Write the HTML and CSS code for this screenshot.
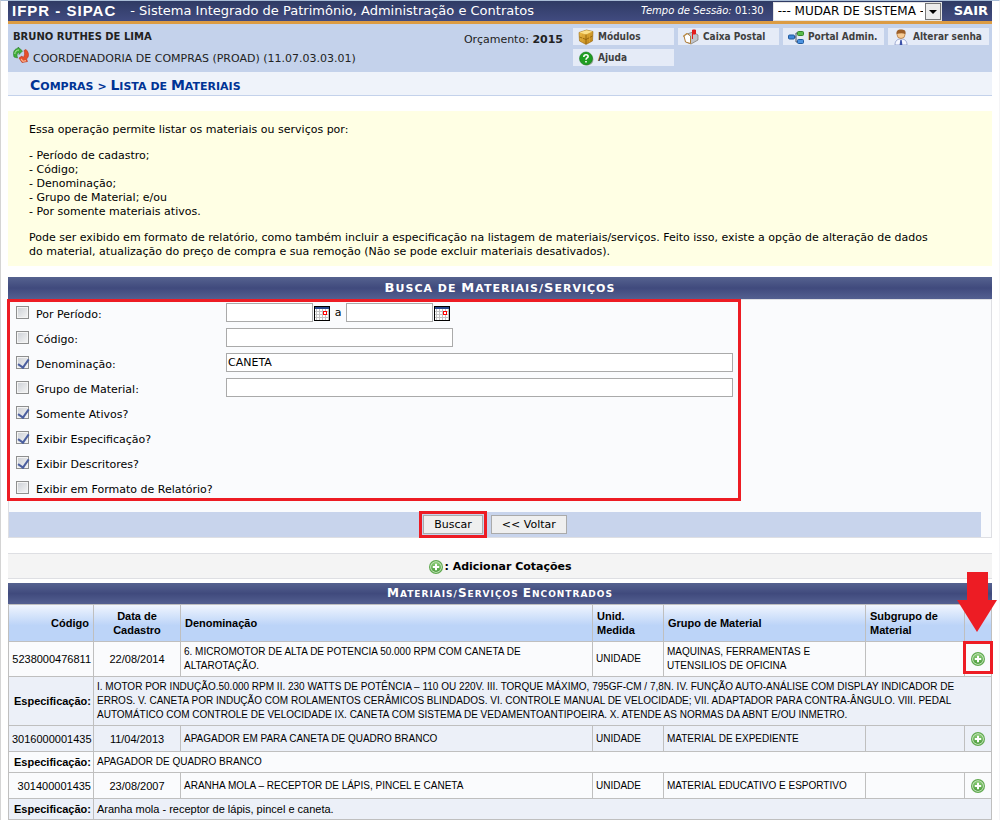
FILE: index.html
```html
<!DOCTYPE html>
<html lang="pt-BR">
<head>
<meta charset="utf-8">
<title>SIPAC - Lista de Materiais</title>
<link rel="stylesheet" href="styles.css">
</head>
<body>
<svg class="defs" aria-hidden="true">
  <defs>
    <linearGradient id="green" x1="0" y1="0" x2="0" y2="1"><stop offset="0" stop-color="#8fce7c"/><stop offset="1" stop-color="#4a9c3a"/></linearGradient>
    <linearGradient id="gold" x1="0" y1="0" x2="1" y2="1"><stop offset="0" stop-color="#f0c04a"/><stop offset="1" stop-color="#b87d12"/></linearGradient>
    <symbol id="add" viewBox="0 0 16 16">
      <circle cx="8" cy="8" r="7" fill="#5fa94e"/>
      <circle cx="8" cy="8" r="5.8" fill="#d5ecce"/>
      <circle cx="8" cy="8" r="5" fill="url(#green)"/>
      <path d="M7 4.800h2V7h2.200v2H9v2.200H7V9H4.800V7H7z" fill="#fff"/>
    </symbol>
    <symbol id="calendar" viewBox="0 0 16 15">
      <rect width="16" height="15" fill="#000"/>
      <rect x="1" y="1" width="14" height="2" fill="#26468c"/>
      <rect x="1" y="3" width="14" height="11" fill="#fff"/>
      <path d="M1 5.500h14M1 8.500h14M1 11.500h14M2.500 3v11M5.500 3v11M8.500 3v11M11.500 3v11M14.500 3v11" stroke="#c4c4c4"/>
      <rect x="9.500" y="5.500" width="3" height="3" fill="#fff" stroke="#f00"/>
    </symbol>
  </defs>
</svg>
<div class="page">
  <header class="topbar">
    <h1 class="brand">IFPR - SIPAC</h1>
    <span class="brand-sub">- Sistema Integrado de Patrimônio, Administração e Contratos</span>
    <span class="session"><em>Tempo de Sessão:</em> 01:30</span>
    <span class="switch">
      <select aria-label="Mudar de sistema"><option>--- MUDAR DE SISTEMA ---</option></select>
      <svg class="switch-arrow" viewBox="0 0 16 17" aria-hidden="true"><rect x=".5" y=".5" width="15" height="16" fill="#ececec" stroke="#777"/><path d="M4 7h8l-4 4z" fill="#000"/></svg>
    </span>
    <a class="exit" href="#">SAIR</a>
  </header>

  <section class="userbar">
    <div class="user">
      <strong>BRUNO RUTHES DE LIMA</strong>
      <span class="unit">
        <svg class="icon" viewBox="0 0 16 16" aria-hidden="true">
          <path d="M1 10C-.5 5 1.500 1.500 5 1.500V0l4.500 4L6 7.500V5.500C4 5.500 3.500 8 4.500 11z" fill="#3fae38" stroke="#2b7d2b" stroke-width=".6"/>
          <path d="M1.800 7C2 4.500 3.500 3 6 3" stroke="#b5e6a5" fill="none"/>
          <path d="M11 3.500l2-1c3 3 3.500 7 .5 9.500l1 2.500-5.500 1L6 11l3-2 1 1.500c1.800-1.500 2-4 1-7z" fill="#e5502a" stroke="#b83318" stroke-width=".6"/>
          <path d="M8 12l2 2.300 3-.6" stroke="#f9b48f" stroke-width="1.200" fill="none"/>
        </svg>
        COORDENADORIA DE COMPRAS (PROAD) (11.07.03.03.01)
      </span>
    </div>
    <div class="budget">Orçamento: <strong>2015</strong></div>
    <nav class="menu">
      <a href="#"><svg class="icon" viewBox="0 0 16 16" aria-hidden="true"><path d="M1 3.500L8.500 1 15 2.500 14.500 12 8 15.500 1.500 12z" fill="url(#gold)" stroke="#9a6a10" stroke-width=".6"/><path d="M1.500 3.500L8 5.500l6.500-3L8.500 1.300z" fill="#fbe08a"/><path d="M8 5.500v9.500M1.500 8L8 10.500 14.500 7" stroke="#8c5c08" stroke-width=".8" fill="none"/><path d="M4.500 5v8M11.500 4.500V13" stroke="#d9a233" stroke-width=".8"/></svg>Módulos</a>
      <a href="#"><svg class="icon" viewBox="0 0 16 16" aria-hidden="true"><path d="M4 5l6-2 5 3v5l-7 4-5-2z" fill="#bfc4cc" stroke="#7d7467" stroke-width=".7"/><path d="M1 7l3-2.500L7.500 7v7.500L2.500 13z" fill="#fff" stroke="#b07c36"/><path d="M0 7.500L4 4.500" stroke="#b98a45" stroke-width="1.200"/><path d="M9.500 10V1h3v4h-3" fill="#e31b1b" stroke="#e31b1b"/></svg>Caixa Postal</a>
      <a href="#"><svg class="icon" viewBox="0 0 16 16" aria-hidden="true"><path d="M5 8h3V4h3M8 8v5h3" stroke="#4a5566" fill="none"/><rect x=".5" y="6" width="6" height="4" rx="1" fill="#3f86d8" stroke="#215a9d"/><rect x="9.500" y="2.500" width="6" height="4" rx="1" fill="#59bb4c" stroke="#35852c"/><rect x="9.500" y="10.500" width="6" height="4" rx="1" fill="#4b92e0" stroke="#215a9d"/></svg>Portal Admin.</a>
      <a href="#"><svg class="icon" viewBox="0 0 16 16" aria-hidden="true"><path d="M2 16c0-4 2-6 6-6s6 2 6 6z" fill="#f5f7ff" stroke="#8797c7" stroke-width=".8"/><path d="M7.300 11h1.400l.7 5H6.600z" fill="#3b51a8"/><circle cx="8" cy="5.500" r="4" fill="#f7cb94" stroke="#a86d34" stroke-width=".7"/><path d="M3.500 5C3 1 6 0 9 .5S13 2 12.500 5C10 4 7 4 3.500 5z" fill="#9d5f28"/></svg>Alterar senha</a>
      <a href="#"><svg class="icon" viewBox="0 0 16 16" aria-hidden="true"><circle cx="9.500" cy="9.500" r="6" fill="#a5afa5"/><circle cx="8" cy="8.500" r="6.500" fill="#1f9e22" stroke="#137317" stroke-width=".6"/><path d="M5.800 7c0-3 4.600-2.800 4.300-.4C10 8 8 8 8 9.700M8 11v1.600" stroke="#fff" stroke-width="1.600" fill="none"/></svg>Ajuda</a>
    </nav>
  </section>

  <h2 class="crumbs caps-title"><span>Compras</span> &gt; <span>Lista</span> <i>de</i> <span>Materiais</span></h2>

  <section class="intro">
    <p>Essa operação permite listar os materiais ou serviços por:</p>
    <ul>
      <li>- Período de cadastro;</li>
      <li>- Código;</li>
      <li>- Denominação;</li>
      <li>- Grupo de Material; e/ou</li>
      <li>- Por somente materiais ativos.</li>
    </ul>
    <p>Pode ser exibido em formato de relatório, como também incluir a especificação na listagem de materiais/serviços. Feito isso, existe a opção de alteração de dados do material, atualização do preço de compra e sua remoção (Não se pode excluir materiais desativados).</p>
  </section>

  <form class="search">
    <h3 class="bar caps-title"><span>Busca</span> <i>de</i> <span>Materiais/</span><span>Serviços</span></h3>
    <div class="search-body">
      <div class="fields">
        <div class="row"><input type="checkbox" id="c1"><label for="c1">Por Período:</label>
          <span class="dates"><input type="text" class="text date" aria-label="Data inicial"><svg class="cal" aria-hidden="true"><use href="#calendar"/></svg><span class="to">a</span><input type="text" class="text date" aria-label="Data final"><svg class="cal" aria-hidden="true"><use href="#calendar"/></svg></span></div>
        <div class="row"><input type="checkbox" id="c2"><label for="c2">Código:</label><input type="text" class="text code" aria-label="Código"></div>
        <div class="row"><input type="checkbox" id="c3" checked><label for="c3">Denominação:</label><input type="text" class="text" value="CANETA" aria-label="Denominação"></div>
        <div class="row"><input type="checkbox" id="c4"><label for="c4">Grupo de Material:</label><input type="text" class="text" aria-label="Grupo de Material"></div>
        <div class="row"><input type="checkbox" id="c5" checked><label for="c5">Somente Ativos?</label></div>
        <div class="row"><input type="checkbox" id="c6" checked><label for="c6">Exibir Especificação?</label></div>
        <div class="row"><input type="checkbox" id="c7" checked><label for="c7">Exibir Descritores?</label></div>
        <div class="row"><input type="checkbox" id="c8"><label for="c8">Exibir em Formato de Relatório?</label></div>
        <span class="mark mark-fields"></span>
      </div>
      <div class="actions">
        <span class="marked"><button type="button">Buscar</button><span class="mark mark-button"></span></span>
        <button type="button">&lt;&lt; Voltar</button>
      </div>
    </div>
  </form>

  <div class="legend"><svg class="icon" aria-hidden="true"><use href="#add"/></svg>: Adicionar Cotações</div>

  <table class="results">
    <caption class="bar caps-title"><span>Materiais/</span><span>Serviços</span> <span>Encontrados</span></caption>
    <colgroup><col class="w-code"><col class="w-date"><col><col class="w-unit"><col class="w-group"><col class="w-sub"><col class="w-act"></colgroup>
    <thead>
      <tr><th class="right">Código</th><th class="center">Data de Cadastro</th><th>Denominação</th><th>Unid. Medida</th><th>Grupo de Material</th><th>Subgrupo de Material</th><th></th></tr>
    </thead>
    <tbody>
      <tr><td class="right">5238000476811</td><td class="center">22/08/2014</td><td class="small name">6. MICROMOTOR DE ALTA DE POTENCIA 50.000 RPM COM CANETA DE ALTAROTAÇÃO.</td><td class="small">UNIDADE</td><td class="small group">MAQUINAS, FERRAMENTAS E UTENSILIOS DE OFICINA</td><td></td>
        <td class="act"><a href="#" aria-label="Adicionar cotação"><svg class="icon"><use href="#add"/></svg></a><span class="mark mark-cell"></span><svg class="arrow" viewBox="0 0 40 60" aria-hidden="true"><path d="M10 0h21v28h9L20 60 0 28h10z" fill="#ed1c24"/></svg></td></tr>
      <tr class="alt"><th class="right">Especificação:</th><td class="small" colspan="6">I. MOTOR POR INDUÇÃO.50.000 RPM II. 230 WATTS DE POTÊNCIA – 110 OU 220V. III. TORQUE MÁXIMO, 795GF-CM / 7,8N. IV. FUNÇÃO AUTO-ANÁLISE COM DISPLAY INDICADOR DE ERROS. V. CANETA POR INDUÇÃO COM ROLAMENTOS CERÂMICOS BLINDADOS. VI. CONTROLE MANUAL DE VELOCIDADE; VII. ADAPTADOR PARA CONTRA-ÂNGULO. VIII. PEDAL AUTOMÁTICO COM CONTROLE DE VELOCIDADE IX. CANETA COM SISTEMA DE VEDAMENTOANTIPOEIRA. X. ATENDE AS NORMAS DA ABNT E/OU INMETRO.</td></tr>
      <tr class="alt item"><td class="right">3016000001435</td><td class="center">11/04/2013</td><td class="small">APAGADOR EM PARA CANETA DE QUADRO BRANCO</td><td class="small">UNIDADE</td><td class="small">MATERIAL DE EXPEDIENTE</td><td></td><td class="act"><a href="#" aria-label="Adicionar cotação"><svg class="icon"><use href="#add"/></svg></a></td></tr>
      <tr><th class="right">Especificação:</th><td class="small" colspan="6">APAGADOR DE QUADRO BRANCO</td></tr>
      <tr class="item"><td class="right">301400001435</td><td class="center">23/08/2007</td><td class="small">ARANHA MOLA – RECEPTOR DE LÁPIS, PINCEL E CANETA</td><td class="small">UNIDADE</td><td class="small">MATERIAL EDUCATIVO E ESPORTIVO</td><td></td><td class="act"><a href="#" aria-label="Adicionar cotação"><svg class="icon"><use href="#add"/></svg></a></td></tr>
      <tr class="alt"><th class="right">Especificação:</th><td colspan="6">Aranha mola - receptor de lápis, pincel e caneta.</td></tr>
    </tbody>
  </table>
</div>
</body>
</html>
```
FILE: styles.css
```css
* { box-sizing: border-box; }
body {
  margin: 0;
  background: #fff;
  color: #000;
  font: 11px/14px Verdana, "DejaVu Sans", sans-serif;
}
.defs { position: absolute; width: 0; height: 0; }
.page {
  border-top: 1px solid #a9bdd6;
  border-left: 1px solid #d4d4d4;
  border-right: 1px solid #f4f4f6;
  padding: 0 7px;
}
.icon { width: 16px; height: 16px; flex: none; }
a { color: inherit; text-decoration: none; }
h1, h2, h3, p, ul { margin: 0; padding: 0; }

.topbar {
  display: flex;
  align-items: center;
  height: 23px;
  padding: 0 4px;
  background: linear-gradient(#2f3b64, #414b80);
  border-bottom: 3px solid #dc9c43;
  color: #fff;
  white-space: nowrap;
}
.brand { font: bold 15px/20px "Liberation Sans", Arial, sans-serif; letter-spacing: 1px; }
.brand-sub { margin-left: 14px; font-size: 13px; }
.session { margin-left: auto; font-size: 10px; }
.switch { position: relative; display: flex; width: 169px; margin: 0 12px 0 9px; }
.switch select {
  appearance: none;
  width: 100%;
  height: 19px;
  padding: 0 18px 0 4px;
  border: 1px solid #e4e4e4;
  border-radius: 0;
  background: #fff;
  color: #000;
  font: 12px/17px Verdana, "DejaVu Sans", sans-serif;
}
.switch-arrow { position: absolute; top: 1px; right: 1px; width: 16px; height: 17px; pointer-events: none; }
.exit { font-size: 13px; font-weight: bold; }

.userbar {
  display: flex;
  align-items: flex-start;
  min-height: 48px;
  padding: 4px 3px 0 5px;
  background: #c4d2eb;
  color: #222;
}
.user { flex: 1; font-size: 10px; padding-top: 2px; }
.user strong { display: block; }
.unit { display: flex; gap: 4px; margin-top: 3px; line-height: 24px; font-size: 11px; }
.budget { margin: 5px 10px 0 0; font-size: 11px; }
.menu { display: grid; grid-template-columns: repeat(4, 101px); gap: 4px; }
.menu a {
  display: flex;
  align-items: center;
  gap: 4px;
  height: 17px;
  padding-left: 5px;
  background: #e5ebf7;
  color: #404040;
  font: bold 10px/17px Verdana, "DejaVu Sans Condensed", "DejaVu Sans", sans-serif;
  white-space: nowrap;
}

/* Headings in capitals with a larger initial on each main word */
.caps-title { text-transform: uppercase; font-weight: bold; }
.caps-title span { display: inline-block; }
.caps-title i { font-style: normal; }

.crumbs {
  height: 24px;
  padding: 3px 22px 0;
  background: #eff3fa;
  border-bottom: 1px solid #c4d2eb;
  color: #003395;
  font-size: 11px;
  line-height: 20px;
}
.crumbs span::first-letter { font-size: 14px; }
.intro { margin: 15px 0 11px; padding: 12px 21px 7px; background: #ffffe4; }
.intro ul { margin: 12px 0; list-style: none; }
.intro p { padding-right: 30px; }

.bar {
  height: 22px;
  background: linear-gradient(#55628f, #404a7d 50%, #535f90);
  color: #fff;
  font-size: 11px;
  line-height: 22px;
  letter-spacing: 1px;
  text-align: center;
}
.bar span::first-letter { font-size: 13px; }
.search-body { border: 1px solid #dedfe3; background: #fafbfd; }
.fields { position: relative; max-width: 724px; padding-bottom: 12px; }
.row { display: grid; grid-template-columns: 20px 190px 1fr; height: 25px; padding-left: 7px; align-items: start; }
.row label { padding-top: 8px; white-space: nowrap; }
.row input[type="checkbox"] {
  appearance: none;
  width: 13px;
  height: 13px;
  margin: 6px 0 0;
  border: 1px solid #8e8f8f;
  background: linear-gradient(135deg, #cbcfd5, #f6f6f6);
  box-shadow: inset 0 0 0 1px #f4f4f4;
}
.row input[type="checkbox"]:checked::before {
  content: "";
  display: block;
  width: 5px;
  height: 9px;
  margin: 0 0 0 3px;
  border: solid #4b5f9f;
  border-width: 0 2px 2px 0;
  transform: rotate(35deg);
}
.text {
  width: 100%;
  height: 19px;
  margin-top: 3px;
  padding: 0 1px;
  border: 1px solid #aaa;
  background: #fff;
  color: #000;
  font: 11px/17px Verdana, "DejaVu Sans", sans-serif;
}
.code { width: 227px; }
.dates { display: flex; align-items: flex-start; }
.date { width: 87px; }
.cal { width: 16px; height: 15px; margin: 6px 0 0 1px; }
.to { width: 16px; padding-top: 6px; text-align: center; }
.actions {
  display: flex;
  justify-content: center;
  align-items: flex-start;
  gap: 8px;
  height: 25px;
  margin-right: 10px;
  padding-top: 3px;
  background: #c8d4ec;
}
.marked { position: relative; display: flex; }
button {
  height: 19px;
  padding: 0 10px;
  border: 1px solid #aaa;
  background: #efefef;
  color: #000;
  font: 11px/17px Verdana, "DejaVu Sans", sans-serif;
}
.mark { position: absolute; border: 3px solid #ed1c24; pointer-events: none; }
.mark-fields { inset: -1px -8px 11px -2px; }
.mark-button { inset: -4px; }

.legend {
  display: flex;
  justify-content: center;
  align-items: center;
  height: 26px;
  margin: 15px 0 4px;
  padding-top: 2px;
  border: solid #dedfe3;
  border-width: 1px 0;
  background: #f4f4f4;
  font-weight: bold;
}

.results {
  width: 100%;
  border-collapse: collapse;
  table-layout: fixed;
  background: #fafbfd;
  font: 11px/14px "Liberation Sans", Arial, sans-serif;
}
.results caption { height: 21px; font: bold 9px/21px Verdana, "DejaVu Sans", sans-serif; }
.results caption span::first-letter { font-size: 12px; }
.w-code { width: 85px; }
.w-date { width: 87px; }
.w-unit { width: 71px; }
.w-group { width: 202px; }
.w-sub { width: 99px; }
.w-act { width: 27px; }
.results th, .results td { border: 1px solid #bfbfbf; padding: 3px 2px 3px 3px; text-align: left; }
.results .right { text-align: right; }
.results .center { padding-left: 12px; padding-right: 12px; text-align: center; }
.results .small { font-size: 10px; }
.results thead th { padding: 4px; }
.results thead tr { background: linear-gradient(#f0f5fe, #bcd4f8 55%, #bcd4f8); }
.results .name { padding-right: 40px; }
.results .group { padding-right: 30px; }
.results .alt { background: #ecf0f8; }
.results .item { height: 26px; }
.results .act { position: relative; padding: 0; text-align: center; }
.act a { display: block; height: 16px; }
.mark-cell { inset: -1px -2px 2px -2px; }
.arrow { position: absolute; right: -6px; bottom: 44px; width: 40px; height: 60px; }
```
